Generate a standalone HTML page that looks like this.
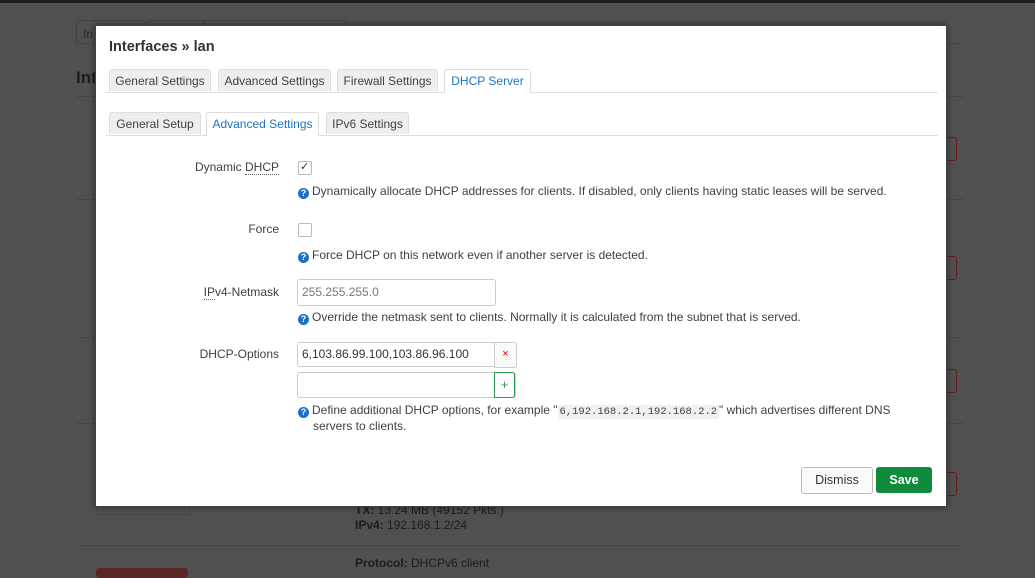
<!DOCTYPE html>
<html style="background:#505050"><head><meta charset="utf-8"><style>
body{margin:0;width:1035px;height:573px;overflow:hidden;background:#505050;font-family:"Liberation Sans",Arial,sans-serif;font-size:12px;color:#404040;position:relative}
.a{position:absolute}
.bg{left:0;top:0;width:1035px;height:573px;background:#505050}
.topbar{left:0;top:0;width:1035px;height:3px;background:#1e1e1e}
.hr{height:1px;background:#464646;left:76px;width:888px}
.redbox{border:1px solid #6b1c1c;border-radius:3px;width:20px;height:22px;left:935px}
.modal{left:95px;top:25px;width:850px;height:480px;background:#fff;border:1px solid #444;box-shadow:0 0 6px rgba(0,0,0,.5)}
.tab{position:absolute;height:22px;line-height:22px;background:#eee;border:1px solid #ddd;border-bottom:none;border-radius:3px 3px 0 0;text-align:center;font-size:12px;color:#404040;box-sizing:border-box}
.tab.act{background:#fff;color:#1a73c6;height:24px}
.lbl{position:absolute;text-align:right;font-size:12px;color:#404040}
.help{position:absolute;font-size:12px;color:#404040}
.q{display:inline-block;width:11px;height:11px;border-radius:50%;background:#1a6fcf;color:#fff;font-size:9px;font-weight:bold;line-height:11px;text-align:center;vertical-align:-1px;margin-right:3px}
.inp{position:absolute;border:1px solid #ccc;border-radius:3px;background:#fff;font-size:12px;padding-left:4px;box-sizing:border-box}
.cb{position:absolute;width:12px;height:12px;border:1px solid #bbb;border-radius:2px;background:#fff}
</style></head><body>
<div class="a bg"></div>
<div class="a topbar"></div>
<div class="a" style="left:76px;top:20px;width:68px;height:24px;border:1px solid #444;border-bottom:none;border-radius:3px 3px 0 0"></div>
<div class="a" style="left:147px;top:20px;width:55px;height:24px;border:1px solid #444;border-bottom:none"></div>
<div class="a" style="left:205px;top:20px;width:140px;height:24px;border:1px solid #444;border-bottom:none"></div>
<div class="a" style="left:83px;top:27px;color:#2a2a2a;font-size:12px">In</div>
<div class="a" style="left:76px;top:68px;color:#1e1e1e;font-size:17px;font-weight:bold">Int</div>
<div class="a hr" style="top:43px"></div>
<div class="a hr" style="top:96px"></div>
<div class="a hr" style="top:199px"></div>
<div class="a hr" style="top:337px"></div>
<div class="a hr" style="top:423px"></div>
<div class="a hr" style="top:545px"></div>
<div class="a redbox" style="top:137px"></div>
<div class="a redbox" style="top:256px"></div>
<div class="a redbox" style="top:369px"></div>
<div class="a redbox" style="top:472px"></div>
<div class="a" style="left:96px;top:490px;width:92px;height:23px;border:1px solid #444;border-radius:3px"></div>
<div class="a" style="left:96px;top:568px;width:92px;height:10px;background:#5a2626;border-radius:3px"></div>
<div class="a" style="left:355px;top:503px;color:#1c1c1c;font-size:12px"><b>TX:</b> 13.24 MB (49152 Pkts.)</div>
<div class="a" style="left:355px;top:518px;color:#1c1c1c;font-size:12px"><b>IPv4:</b> 192.168.1.2/24</div>
<div class="a" style="left:355px;top:556px;color:#1c1c1c;font-size:12px"><b>Protocol:</b> DHCPv6 client</div>

<div class="a modal">
 <div class="a" style="left:13px;top:13px;font-size:14.5px;font-weight:bold;color:#333">Interfaces » lan</div>
 <div class="a" style="left:10px;top:66px;width:832px;height:1px;background:#ddd"></div>
 <div class="tab" style="left:13px;top:43px;width:102px">General Settings</div>
 <div class="tab" style="left:122px;top:43px;width:113px">Advanced Settings</div>
 <div class="tab" style="left:241px;top:43px;width:101px">Firewall Settings</div>
 <div class="tab act" style="left:348px;top:43px;width:87px">DHCP Server</div>
 <div class="a" style="left:10px;top:109px;width:832px;height:1px;background:#ddd"></div>
 <div class="tab" style="left:13px;top:86px;width:92px">General Setup</div>
 <div class="tab act" style="left:110px;top:86px;width:113px">Advanced Settings</div>
 <div class="tab" style="left:230px;top:86px;width:83px">IPv6 Settings</div>

 <div class="lbl" style="left:0;width:183px;top:134px">Dynamic <span style="border-bottom:1px dotted #666">DHCP</span></div>
 <div class="cb" style="left:202px;top:135px"><span style="position:absolute;left:1px;top:-1px;font-size:11px;color:#333;line-height:12px">✓</span></div>
 <div class="help" style="left:202px;top:158px"><span class="q">?</span>Dynamically allocate DHCP addresses for clients. If disabled, only clients having static leases will be served.</div>

 <div class="lbl" style="left:0;width:183px;top:196px">Force</div>
 <div class="cb" style="left:202px;top:197px"></div>
 <div class="help" style="left:202px;top:222px"><span class="q">?</span>Force DHCP on this network even if another server is detected.</div>

 <div class="lbl" style="left:0;width:183px;top:259px"><span style="border-bottom:1px dotted #666">IP</span>v4-Netmask</div>
 <div class="inp" style="left:201px;top:253px;width:199px;height:27px;line-height:25px;color:#777">255.255.255.0</div>
 <div class="help" style="left:202px;top:284px"><span class="q">?</span>Override the netmask sent to clients. Normally it is calculated from the subnet that is served.</div>

 <div class="lbl" style="left:0;width:183px;top:321px">DHCP-Options</div>
 <div class="inp" style="left:201px;top:316px;width:219px;height:25px;line-height:23px;color:#333">6,103.86.99.100,103.86.96.100</div>
 <div class="a" style="left:398px;top:316px;width:21px;height:24px;border:1px solid #ccc;border-radius:0 3px 3px 0;background:#fafafa;color:#c00;text-align:center;line-height:22px;font-size:11px">×</div>
 <div class="inp" style="left:201px;top:346px;width:219px;height:26px"></div>
 <div class="a" style="left:398px;top:346px;width:19px;height:24px;border:1px solid #2a9a4a;border-radius:0 3px 3px 0;background:#fff;color:#2a9a4a;text-align:center;line-height:23px;font-size:13px">+</div>
 <div class="help" style="left:202px;top:377px;width:620px;line-height:14px"><span class="q">?</span>Define additional DHCP options, for example "<code style="font-family:'Liberation Mono',monospace;font-size:10.5px;background:#f0f0f0;padding:1px 2px">6,192.168.2.1,192.168.2.2</code>" which advertises different DNS<br><span style="padding-left:15px">servers to clients.</span></div>

 <div class="a" style="left:705px;top:441px;width:70px;height:25px;border:1px solid #bbb;border-radius:3px;background:#fafafa;text-align:center;line-height:25px;font-size:12.5px;color:#333">Dismiss</div>
 <div class="a" style="left:780px;top:441px;width:56px;height:26px;border-radius:3px;background:#0f8a3a;text-align:center;line-height:26px;font-size:12.5px;font-weight:bold;color:#fff">Save</div>
</div>
</body></html>
